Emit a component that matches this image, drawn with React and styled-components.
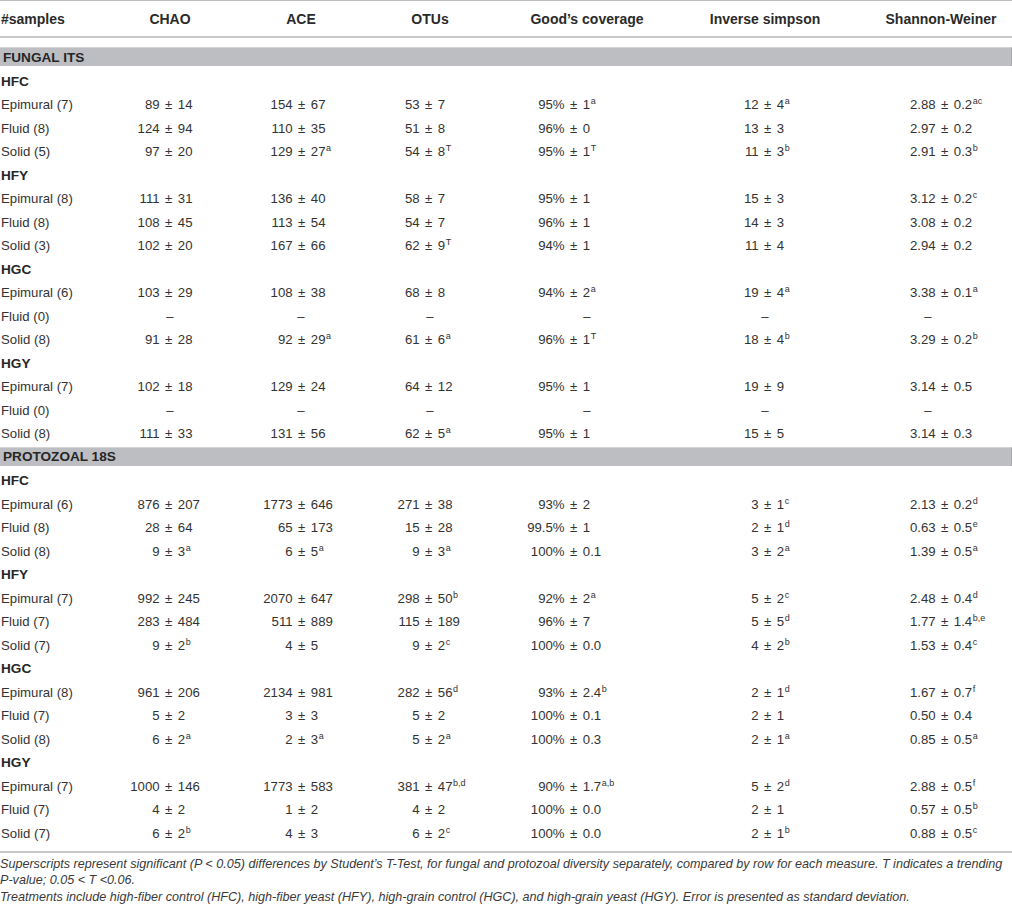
import React from "react";
import styled, { createGlobalStyle } from "styled-components";

const GlobalStyle = createGlobalStyle`
    body {
        margin: 0;
        background: #ffffff;
        font-family: 'Liberation Sans', Arial, Helvetica, sans-serif;
        color: #333333;
    }
`;

// width of each column and where its ± sits, measured from the column's left edge
const columns = [
    { title: "CHAO", width: 120, pm: 59 },
    { title: "ACE", width: 142, pm: 72 },
    { title: "OTUs", width: 116, pm: 57 },
    { title: "Good’s coverage", width: 198, pm: 86 },
    { title: "Inverse simpson", width: 158, pm: 82 },
    { title: "Shannon-Weiner", width: 168, pm: 101, indent: 26 },
];

const template = `110px ${columns.map((c) => c.width + "px").join(" ")}`;

const sections = [
    {
        name: "FUNGAL ITS",
        groups: [
            {
                name: "HFC",
                rows: [
                    ["Epimural (7)", "89 ± 14", "154 ± 67", "53 ± 7", "95% ± 1^a", "12 ± 4^a", "2.88 ± 0.2^ac"],
                    ["Fluid (8)", "124 ± 94", "110 ± 35", "51 ± 8", "96% ± 0", "13 ± 3", "2.97 ± 0.2"],
                    ["Solid (5)", "97 ± 20", "129 ± 27^a", "54 ± 8^T", "95% ± 1^T", "11 ± 3^b", "2.91 ± 0.3^b"],
                ],
            },
            {
                name: "HFY",
                rows: [
                    ["Epimural (8)", "111 ± 31", "136 ± 40", "58 ± 7", "95% ± 1", "15 ± 3", "3.12 ± 0.2^c"],
                    ["Fluid (8)", "108 ± 45", "113 ± 54", "54 ± 7", "96% ± 1", "14 ± 3", "3.08 ± 0.2"],
                    ["Solid (3)", "102 ± 20", "167 ± 66", "62 ± 9^T", "94% ± 1", "11 ± 4", "2.94 ± 0.2"],
                ],
            },
            {
                name: "HGC",
                rows: [
                    ["Epimural (6)", "103 ± 29", "108 ± 38", "68 ± 8", "94% ± 2^a", "19 ± 4^a", "3.38 ± 0.1^a"],
                    ["Fluid (0)", "–", "–", "–", "–", "–", "–"],
                    ["Solid (8)", "91 ± 28", "92 ± 29^a", "61 ± 6^a", "96% ± 1^T", "18 ± 4^b", "3.29 ± 0.2^b"],
                ],
            },
            {
                name: "HGY",
                rows: [
                    ["Epimural (7)", "102 ± 18", "129 ± 24", "64 ± 12", "95% ± 1", "19 ± 9", "3.14 ± 0.5"],
                    ["Fluid (0)", "–", "–", "–", "–", "–", "–"],
                    ["Solid (8)", "111 ± 33", "131 ± 56", "62 ± 5^a", "95% ± 1", "15 ± 5", "3.14 ± 0.3"],
                ],
            },
        ],
    },
    {
        name: "PROTOZOAL 18S",
        groups: [
            {
                name: "HFC",
                rows: [
                    ["Epimural (6)", "876 ± 207", "1773 ± 646", "271 ± 38", "93% ± 2", "3 ± 1^c", "2.13 ± 0.2^d"],
                    ["Fluid (8)", "28 ± 64", "65 ± 173", "15 ± 28", "99.5% ± 1", "2 ± 1^d", "0.63 ± 0.5^e"],
                    ["Solid (8)", "9 ± 3^a", "6 ± 5^a", "9 ± 3^a", "100% ± 0.1", "3 ± 2^a", "1.39 ± 0.5^a"],
                ],
            },
            {
                name: "HFY",
                rows: [
                    ["Epimural (7)", "992 ± 245", "2070 ± 647", "298 ± 50^b", "92% ± 2^a", "5 ± 2^c", "2.48 ± 0.4^d"],
                    ["Fluid (7)", "283 ± 484", "511 ± 889", "115 ± 189", "96% ± 7", "5 ± 5^d", "1.77 ± 1.4^b,e"],
                    ["Solid (7)", "9 ± 2^b", "4 ± 5", "9 ± 2^c", "100% ± 0.0", "4 ± 2^b", "1.53 ± 0.4^c"],
                ],
            },
            {
                name: "HGC",
                rows: [
                    ["Epimural (8)", "961 ± 206", "2134 ± 981", "282 ± 56^d", "93% ± 2.4^b", "2 ± 1^d", "1.67 ± 0.7^f"],
                    ["Fluid (7)", "5 ± 2", "3 ± 3", "5 ± 2", "100% ± 0.1", "2 ± 1", "0.50 ± 0.4"],
                    ["Solid (8)", "6 ± 2^a", "2 ± 3^a", "5 ± 2^a", "100% ± 0.3", "2 ± 1^a", "0.85 ± 0.5^a"],
                ],
            },
            {
                name: "HGY",
                rows: [
                    ["Epimural (7)", "1000 ± 146", "1773 ± 583", "381 ± 47^b,d", "90% ± 1.7^a,b", "5 ± 2^d", "2.88 ± 0.5^f"],
                    ["Fluid (7)", "4 ± 2", "1 ± 2", "4 ± 2", "100% ± 0.0", "2 ± 1", "0.57 ± 0.5^b"],
                    ["Solid (7)", "6 ± 2^b", "4 ± 3", "6 ± 2^c", "100% ± 0.0", "2 ± 1^b", "0.88 ± 0.5^c"],
                ],
            },
        ],
    },
];

const Page = styled.div`
    width: 1012px;
`;

const HeaderRow = styled.div`
    display: grid;
    grid-template-columns: ${template};
    border-top: 1px solid #bdbdbd;
    border-bottom: 2px solid #c9c9c9;
    height: 35px;
    align-items: center;
    margin-bottom: 8px;
    font-size: 14px;
    font-weight: bold;
    color: #2a2a2a;
`;

const HeadCell = styled.div`
    text-align: ${(p) => (p.$left ? "left" : "center")};
    padding-left: ${(p) => (p.$left ? 1 : p.$indent || 0)}px;
    white-space: nowrap;
`;

const BandSlot = styled.div`
    height: 23.5px;
    padding-top: 1px;
    box-sizing: border-box;
`;

const Band = styled.div`
    height: 19px;
    background: #bdbec2;
    border-top: 1px solid #d4d4d6;
    border-right: 1px solid #a8a9ac;
    box-sizing: border-box;
    padding-left: 3px;
    display: flex;
    align-items: center;
    font-size: 13.6px;
    font-weight: bold;
    color: #262626;
`;

const GroupRow = styled.div`
    height: 23.5px;
    line-height: 23.5px;
    padding-left: 1px;
    font-size: 13.6px;
    font-weight: bold;
    color: #262626;
`;

const DataRow = styled.div`
    display: grid;
    grid-template-columns: ${template};
    height: 23.5px;
    line-height: 23.5px;
    font-size: 13.2px;
    white-space: nowrap;
`;

const Label = styled.div`
    padding-left: 1px;
`;

const Value = styled.div`
    text-align: ${(p) => (p.$empty ? "center" : "left")};
`;

const Lead = styled.span`
    display: inline-block;
    width: ${(p) => p.$width}px;
    text-align: right;
`;

const PlusMinus = styled.span`
    padding: 0 5.5px;
`;

const Sup = styled.sup`
    font-size: 9px;
    line-height: 0;
    vertical-align: 5px;
    margin-left: 0.5px;
`;

const TableEnd = styled.div`
    height: 6px;
    border-bottom: 2px solid #c9c9c9;
`;

const Notes = styled.div`
    padding-top: 2.5px;
    font-size: 12.6px;
    font-style: italic;
    line-height: 16.5px;
    color: #3a3a3a;
`;

const Note = styled.p`
    margin: 0;
`;

const Cell = ({ text, pm }) => {
    if (text === "–") {
        return <Value $empty>–</Value>;
    }
    const [lead, rest] = text.split(" ± ");
    const [tail, sup] = rest.split("^");
    return (
        <Value>
            <Lead $width={pm - 9.4}>{lead}</Lead>
            <PlusMinus>±</PlusMinus>
            {tail}
            {sup && <Sup>{sup}</Sup>}
        </Value>
    );
};

const App = () => (
    <Page>
        <GlobalStyle />
        <HeaderRow>
            <HeadCell $left>#samples</HeadCell>
            {columns.map((c) => (
                <HeadCell key={c.title} $indent={c.indent}>{c.title}</HeadCell>
            ))}
        </HeaderRow>
        {sections.map((section) => (
            <React.Fragment key={section.name}>
                <BandSlot>
                    <Band>{section.name}</Band>
                </BandSlot>
                {section.groups.map((group) => (
                    <React.Fragment key={group.name}>
                        <GroupRow>{group.name}</GroupRow>
                        {group.rows.map((row) => (
                            <DataRow key={row[0]}>
                                <Label>{row[0]}</Label>
                                {row.slice(1).map((cell, i) => (
                                    <Cell key={i} text={cell} pm={columns[i].pm} />
                                ))}
                            </DataRow>
                        ))}
                    </React.Fragment>
                ))}
            </React.Fragment>
        ))}
        <TableEnd />
        <Notes>
            <Note>
                Superscripts represent significant (P &lt; 0.05) differences by Student’s T-Test, for fungal and
                protozoal diversity separately, compared by row for each measure. T indicates a trending
                P-value; 0.05 &lt; T &lt;0.06.
            </Note>
            <Note>
                Treatments include high-fiber control (HFC), high-fiber yeast (HFY), high-grain control (HGC),
                and high-grain yeast (HGY). Error is presented as standard deviation.
            </Note>
        </Notes>
    </Page>
);

export default App;
